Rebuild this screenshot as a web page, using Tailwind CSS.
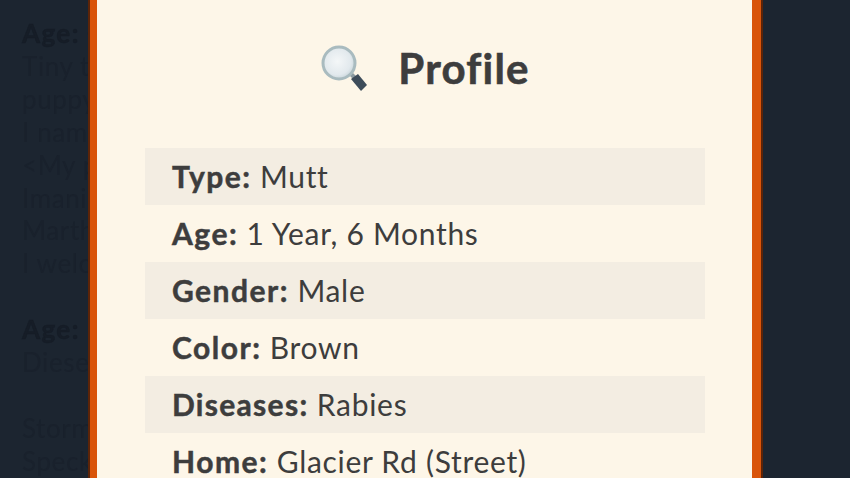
<!DOCTYPE html>
<html lang="en">
<head>
  <meta charset="UTF-8"/>
  <meta name="viewport" content="width=device-width, initial-scale=1"/>
  <script src="https://cdn.jsdelivr.net/npm/@tailwindcss/browser@4"></script>
  <title>Profile</title>
</head>
<body class="relative h-[478px] w-[850px] overflow-hidden bg-[#1c2530] font-['Lato','Noto_Sans',sans-serif]">
  <!-- Dimmed page behind the popup -->
  <div class="px-[22px] pt-[17px] text-[26px] leading-[32.9px] tracking-[0.6px] text-[#19212c] blur-[0.7px]">
    <p class="font-bold tracking-[1.4px] text-[#161d27] [-webkit-text-stroke:0.5px_#161d27]">Age: 0</p>
    <p>Tiny tail</p>
    <p>puppy</p>
    <p>I named</p>
    <p>&lt;My pet</p>
    <p>Imani</p>
    <p>Martha</p>
    <p>I welcomed</p>
    <p>&nbsp;</p>
    <p class="font-bold tracking-[1.4px] text-[#161d27] [-webkit-text-stroke:0.5px_#161d27]">Age: 1</p>
    <p>Diesel</p>
    <p>&nbsp;</p>
    <p>Storm</p>
    <p>Speck</p>
  </div>

  <!-- Popup -->
  <div class="absolute top-0 left-[88px] h-[478px] w-[675px] border-x-2 border-x-[#5c2408] bg-[#d9540a] pr-[9px] pl-[7px]">
    <div class="h-full bg-[#fdf6e8] pr-[47px] pl-[48px] text-[#3d3d3d]">
      <div class="flex h-[148px] items-start justify-center gap-[30px] pt-[41px]">
        <svg class="mt-[4px] h-[48px] w-[48px]" viewBox="0 0 48 48">
          <defs>
            <radialGradient id="lens" cx="0.45" cy="0.45" r="0.6">
              <stop offset="0" stop-color="#f4f7f8"/>
              <stop offset="0.7" stop-color="#e2e9ed"/>
              <stop offset="1" stop-color="#c3d1d6"/>
            </radialGradient>
          </defs>
          <path d="M29 30 L32 27 L37 32 L34 35 Z" fill="#8b9aa1"/>
          <path d="M31 34 L38 29 L47 40 L41 46 Z" fill="#3d4c5a"/>
          <circle cx="19" cy="18" r="16" fill="url(#lens)" stroke="#a9bbbf" stroke-width="3"/>
        </svg>
        <h1 class="text-[42px] leading-[54px] font-bold tracking-[1.2px] [-webkit-text-stroke:0.6px_#3d3d3d]">Profile</h1>
      </div>
      <ul class="text-[30px] leading-[57px] tracking-[0.7px]">
        <li class="bg-[#f3ede2] pl-[27px]"><b class="tracking-[1.5px] [-webkit-text-stroke:0.5px_#3d3d3d]">Type:</b> Mutt</li>
        <li class="pl-[27px]"><b class="tracking-[1.5px] [-webkit-text-stroke:0.5px_#3d3d3d]">Age:</b> 1 Year, 6 Months</li>
        <li class="bg-[#f3ede2] pl-[27px]"><b class="tracking-[1.5px] [-webkit-text-stroke:0.5px_#3d3d3d]">Gender:</b> Male</li>
        <li class="pl-[27px]"><b class="tracking-[1.5px] [-webkit-text-stroke:0.5px_#3d3d3d]">Color:</b> Brown</li>
        <li class="bg-[#f3ede2] pl-[27px]"><b class="tracking-[1.3px] [-webkit-text-stroke:0.5px_#3d3d3d]">Diseases:</b> Rabies</li>
        <li class="pl-[27px]"><b class="tracking-[1.5px] [-webkit-text-stroke:0.5px_#3d3d3d]">Home:</b> Glacier Rd (Street)</li>
      </ul>
    </div>
  </div>
</body>
</html>
